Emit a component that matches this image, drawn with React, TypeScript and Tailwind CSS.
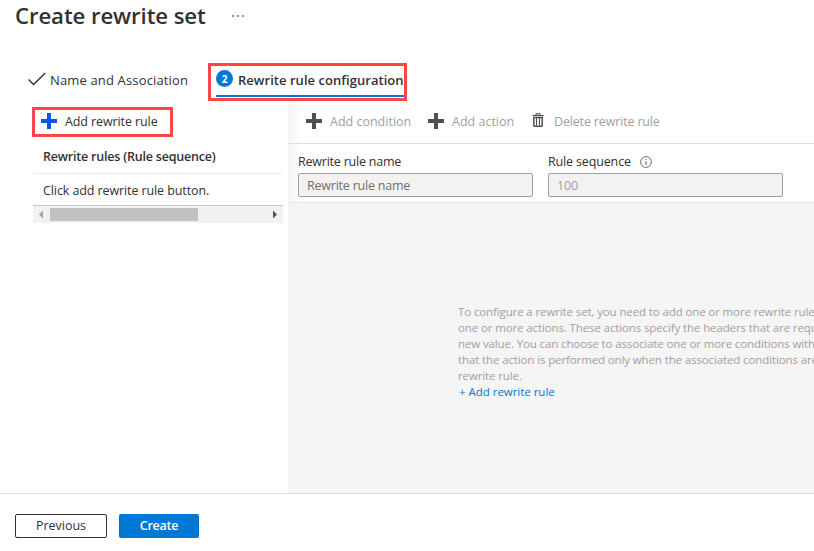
import type { ReactNode } from "react";

function PlusIcon({ className }: { className: string }) {
  return (
    <svg viewBox="0 0 16 16" className={`h-4 w-4 shrink-0 ${className}`} fill="currentColor" shapeRendering="crispEdges">
      <path d="M6 0h4v6h6v4h-6v6H6v-6H0V6h6z" />
    </svg>
  );
}

function TrashIcon() {
  return (
    <svg viewBox="0 0 12 14" className="mt-[-3px] h-3.5 w-3 shrink-0 text-[#505050]" fill="none" stroke="currentColor">
      <path d="M0.5 2.5h11" strokeWidth="1.2" />
      <path d="M4 2V0.7h4V2" strokeWidth="1" />
      <path d="M1.8 4.5v7.9c0 .6.3.9.9.9h6.6c.6 0 .9-.3.9-.9V4.5z" strokeWidth="1.5" />
      <path d="M4.5 5v7.5M7.5 5v7.5" strokeWidth="1.1" />
    </svg>
  );
}

function InfoIcon() {
  return (
    <svg viewBox="0 0 12 12" className="ml-[9px] h-3 w-3 text-[#605e5c]" fill="none" stroke="currentColor">
      <circle cx="6" cy="6" r="5.4" strokeWidth="0.9" />
      <path d="M6 5v4M6 2.8v1.2" strokeWidth="1" />
    </svg>
  );
}

function Command({ icon, children, className }: { icon: ReactNode; children: ReactNode; className: string }) {
  return (
    <button className={`flex items-center text-[#a19f9d] ${className}`}>
      {icon}
      <span className="whitespace-nowrap">{children}</span>
    </button>
  );
}

const HELP_LINES = [
  "To configure a rewrite set, you need to add one or more rewrite rules",
  "one or more actions. These actions specify the headers that are requir",
  "new value. You can choose to associate one or more conditions with",
  "that the action is performed only when the associated conditions are",
  "rewrite rule.",
];

export default function App() {
  return (
    <div className="flex h-[551px] w-[814px] flex-col overflow-hidden bg-white font-['Open_Sans','Noto_Sans',sans-serif] text-[12.5px] leading-4 text-[#323130]">
      <header className="flex h-[63px] items-start pl-[15px]">
        <h1 className="w-[217px] text-[22.2px] leading-8 font-semibold tracking-[-0.1px] whitespace-nowrap">Create rewrite set</h1>
        <svg viewBox="0 0 12 2" className="mt-[15px] h-0.5 w-3" fill="#605e5c">
          <circle cx="1" cy="1" r="0.9" />
          <circle cx="6" cy="1" r="0.9" />
          <circle cx="11" cy="1" r="0.9" />
        </svg>
      </header>

      <nav className="flex h-[38px] shrink-0 pl-7 text-[13px]">
        <button className="flex h-[34px] w-[180px] items-center whitespace-nowrap">
          <svg viewBox="0 0 18 14" className="mt-[-3px] mr-1 h-3.5 w-[18px]" fill="none" stroke="#323130" strokeWidth="1.4">
            <path d="M0.6 7.5l5 5L17.2 1" />
          </svg>
          <span className="pb-px tracking-[0.15px]">Name and Association</span>
        </button>
        <button className="flex h-[38px] w-[199px] flex-col border-[3px] border-[#fa4646] pl-[5px]">
          <span className="flex h-[29px] w-[188px] items-center font-semibold whitespace-nowrap">
            <span className="mt-[-4px] mr-[5px] flex h-[17px] w-[17px] shrink-0 items-center justify-center rounded-full bg-[#0078d4] text-[10px] leading-none font-bold text-white">
              2
            </span>
            <span className="pb-0.5 tracking-[0.04px]">Rewrite rule configuration</span>
          </span>
          <span className="h-0.5 w-[188px] bg-[#0078d4]" />
        </button>
      </nav>

      <main className="flex h-[392px] shrink-0">
        <aside className="w-[288px] pt-1.5 pl-8">
          <button className="flex h-[30px] w-[141px] items-center border-[3px] border-[#fa4646] pl-1.5 whitespace-nowrap">
            <PlusIcon className="mt-[-3px] mr-2 text-[#015cda]" />
            <span className="tracking-[-0.1px]">Add rewrite rule</span>
          </button>
          <div className="ml-px w-[250px]">
            <div className="flex h-[37px] items-center border-b border-[#edebe9] pt-[3px] pl-2.5 font-semibold tracking-[-0.2px] whitespace-nowrap">
              Rewrite rules (Rule sequence)
            </div>
            <div className="flex h-8 items-center border-b border-[#c8c6c4] pt-[3px] pl-2.5 tracking-[-0.1px] whitespace-nowrap">
              Click add rewrite rule button.
            </div>
            <div className="flex h-[17px] items-center bg-[#f1f1f1]">
              <svg viewBox="0 0 17 17" className="h-[17px] w-[17px]" fill="#a3a3a3">
                <path d="M10 4.5v8L6 8.5z" />
              </svg>
              <span className="h-[13px] w-[148px] bg-[#c1c1c1]" />
              <svg viewBox="0 0 17 17" className="ml-auto h-[17px] w-[17px]" fill="#505050">
                <path d="M7 4.5v8l4-4z" />
              </svg>
            </div>
          </div>
        </aside>

        <section className="flex w-[526px] flex-col bg-linear-to-r from-[#f3f3f3] to-white to-[2.5%]">
          <div className="flex h-[43px] items-center border-b border-[#e1dfdd] pb-px pl-[18px]">
            <Command className="w-[122px] gap-2" icon={<PlusIcon className="mt-[-2px] text-[#505050]" />}>Add condition</Command>
            <Command className="w-[104px] gap-2" icon={<PlusIcon className="mt-[-2px] text-[#505050]" />}>Add action</Command>
            <Command className="gap-2.5 tracking-[-0.16px]" icon={<TrashIcon />}>Delete rewrite rule</Command>
          </div>
          <div className="flex h-[59px] gap-[15px] border-b border-[#e5e5e5] pt-2.5 pl-2.5">
            <label className="flex w-[235px] flex-col gap-[3px]">
              <span className="h-4 tracking-[-0.22px] whitespace-nowrap">Rewrite rule name</span>
              <span className="flex h-6 items-center rounded-[2px] border border-[#a19f9d] bg-[#f3f2f1] pt-0.5 pl-2 tracking-[-0.22px] text-[#706e6c]">Rewrite rule name</span>
            </label>
            <label className="flex w-[235px] flex-col gap-[3px]">
              <span className="flex h-4 items-center whitespace-nowrap">
                <span className="tracking-[-0.15px]">Rule sequence</span>
                <InfoIcon />
              </span>
              <span className="flex h-6 items-center rounded-[2px] border border-[#a19f9d] bg-[#f3f2f1] pt-0.5 pl-2 tracking-[-0.2px] text-[#a19f9d]">100</span>
            </label>
          </div>
          <div className="flex-1 overflow-hidden bg-[#f5f5f5] pt-[101px] pl-[170px] text-[11.5px] tracking-[-0.12px] whitespace-nowrap text-[#a19f9d]">
            {HELP_LINES.map((line) => (
              <p key={line}>{line}</p>
            ))}
            <a className="pl-px tracking-[-0.03px] text-[#0078d4]">+ Add rewrite rule</a>
          </div>
        </section>
      </main>

      <footer className="flex h-[58px] shrink-0 gap-3 border-t border-[#dddddd] pt-5 pl-[15px]">
        <button className="h-6 w-[92px] rounded-[2px] border border-[#323130] pb-px">Previous</button>
        <button className="h-6 w-20 rounded-[2px] bg-[#0078d4] pb-px font-semibold tracking-[-0.25px] text-white">Create</button>
      </footer>
    </div>
  );
}
